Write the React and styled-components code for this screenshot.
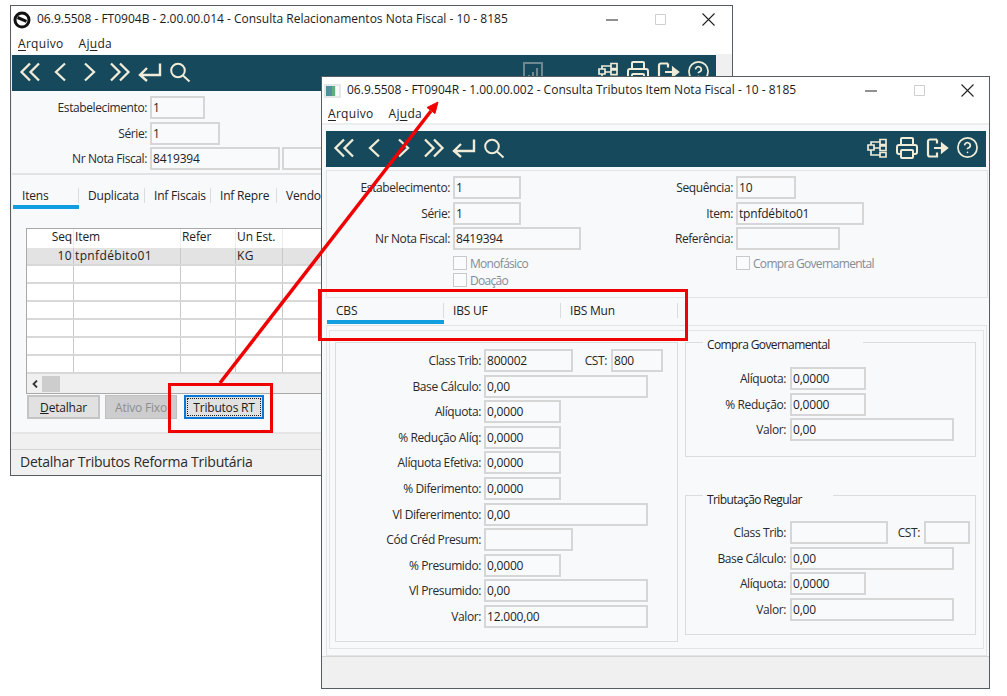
import React from 'react';
import styled, { createGlobalStyle } from 'styled-components';
import { CircleHelp, Printer } from 'lucide-react';

const GlobalStyle = createGlobalStyle`
  html, body { margin: 0; padding: 0; background: #fff; }
  body { font-family: "Open Sans", "Noto Sans", sans-serif; font-size: 12px; color: #222; }
  * { box-sizing: border-box; }
`;

const Desktop = styled.div`
  position: relative;
  width: 1007px;
  height: 696px;
  overflow: hidden;
  background: #fff;
`;

const Window = styled.div`
  position: absolute;
  left: ${(p) => p.$x}px;
  top: ${(p) => p.$y}px;
  width: ${(p) => p.$w}px;
  height: ${(p) => p.$h}px;
  display: flex;
  flex-direction: column;
  background: #f0f0f0;
  border: 1px solid #565d61;
  overflow: hidden;
`;

const TitleBar = styled.div`
  flex: none;
  height: 27px;
  display: flex;
  align-items: center;
  background: #fff;
  padding-left: 2px;
`;

const TitleText = styled.span`
  margin-left: 6px;
  padding-bottom: 2px;
  font-size: 12px;
  white-space: nowrap;
  color: #1c1c1c;
`;

const WinControls = styled.div`
  margin-left: auto;
  margin-right: ${(p) => p.$shift}px;
  display: flex;
  align-items: center;
  color: #222;
`;

const WinButton = styled.span`
  width: 48px;
  height: 27px;
  display: flex;
  align-items: center;
  justify-content: center;
  svg { display: block; }
`;

const MenuBar = styled.div`
  flex: none;
  height: ${(p) => p.$h}px;
  display: flex;
  align-items: center;
  gap: 15px;
  padding-left: ${(p) => p.$pad}px;
  background: #fff;
  font-size: 12px;
  letter-spacing: 0.3px;
  u { text-underline-offset: 2px; }
`;

const Body = styled.div`
  flex: none;
  background: #f8f9fb;
  border-top: 2px solid #ededed;
`;

const Toolbar = styled.div`
  display: flex;
  align-items: center;
  height: 36px;
  margin: ${(p) => p.$margin};
  padding: 0 ${(p) => p.$padRight}px 3px 6px;
  gap: 6px;
  background: #17495c;
  color: #f0ecd8;
`;

const ToolIcon = styled.span`
  flex: none;
  width: 24px;
  height: 24px;
  display: flex;
  align-items: center;
  justify-content: center;
  color: ${(p) => (p.$dim ? '#6f8790' : 'inherit')};
  svg { display: block; }
`;

const Spacer = styled.span`
  flex: 1;
`;

const ToolGap = styled.span`
  flex: none;
  width: ${(p) => p.$w}px;
`;

const FormPanel = styled.div`
  display: grid;
  grid-template-columns: ${(p) => p.$cols};
  height: ${(p) => p.$h}px;
  margin: ${(p) => p.$margin};
  padding-top: ${(p) => p.$padTop}px;
  background: #f8f9fb;
  border: 1px solid #e2e3e5;
  border-width: ${(p) => p.$borders};
`;

const Stack = styled.div`
  display: flex;
  flex-direction: column;
  gap: 2.6px;
`;

const Row = styled.div`
  display: flex;
  align-items: center;
  height: 23px;
  flex: none;
`;

const Label = styled.span`
  flex: none;
  width: ${(p) => p.$w}px;
  text-align: right;
  white-space: nowrap;
  font-size: 12px;
  letter-spacing: -0.4px;
  color: #2a2a2a;
`;

const Input = styled.div`
  flex: none;
  width: ${(p) => p.$w}px;
  height: 23px;
  margin-left: ${(p) => p.$gap ?? 3}px;
  padding: 2px 0 0 1px;
  background: #f9fafc;
  border: 2px solid #d6d6d6;
  font-size: 12px;
  line-height: 16px;
  letter-spacing: -0.2px;
  white-space: nowrap;
  overflow: hidden;
  color: #1d1d1d;
`;

const CheckRow = styled.div`
  display: flex;
  align-items: center;
  height: 17px;
  gap: 3px;
  margin-top: ${(p) => p.$top}px;
  padding-left: ${(p) => p.$pad}px;
  color: #858b96;
  font-size: 12px;
  letter-spacing: -0.7px;
`;

const CheckBox = styled.span`
  flex: none;
  width: 14px;
  height: 14px;
  background: #fafbfc;
  border: 1px solid #c9c9c9;
`;

const TabStrip = styled.div`
  display: flex;
  height: ${(p) => p.$h}px;
  margin: ${(p) => p.$top}px 0 0 ${(p) => p.$left}px;
  overflow: hidden;
`;

const Tab = styled.div`
  flex: none;
  width: ${(p) => p.$w}px;
  display: flex;
  align-items: center;
  padding-top: 2px;
  border-bottom: 4px solid ${(p) => (p.$active ? '#0f9fe0' : 'transparent')};
`;

const TabLabel = styled.span`
  flex: 1;
  height: 15px;
  line-height: 15px;
  padding-left: 9px;
  border-right: 1px solid #dcdcdc;
  white-space: nowrap;
  overflow: hidden;
  font-size: 12px;
  letter-spacing: -0.2px;
`;

const GridBox = styled.div`
  width: 420px;
  margin: 19px 0 0 14px;
  border: 1px solid #a9a9a9;
  border-right: 0;
  background: #fff;
`;

const GridRow = styled.div`
  display: grid;
  grid-template-columns: 47px 107px 55px 47px 1fr;
  height: ${(p) => (p.$header ? 19 : 18)}px;
  background: ${(p) => (p.$selected ? '#e3e3e3' : '#fff')};
  border-bottom: ${(p) => (p.$header ? 'none' : '2px solid #d8d8d8')};
`;

const GridCell = styled.span`
  padding: 0 1px;
  text-align: ${(p) => (p.$right ? 'right' : 'left')};
  border-right: 1px solid ${(p) => (p.$header ? '#ececec' : '#c9c9c9')};
  font-size: 12px;
  line-height: 16px;
  letter-spacing: ${(p) => (p.$header ? '-0.01em' : '0.03em')};
  white-space: nowrap;
  overflow: hidden;
`;

const ScrollBar = styled.div`
  display: flex;
  align-items: center;
  height: 19px;
  background: #f0f0f0;
  padding-left: 5px;
  gap: 4px;
  color: #333;
`;

const ScrollThumb = styled.span`
  width: 18px;
  height: 16px;
  background: #cdcdcd;
`;

const ButtonRow = styled.div`
  display: flex;
  height: 24px;
  margin: 1px 0 13px 15px;
`;

const Button = styled.span`
  flex: none;
  width: ${(p) => p.$w}px;
  margin-right: ${(p) => p.$gap}px;
  display: flex;
  align-items: center;
  justify-content: center;
  font-size: 12px;
  letter-spacing: -0.2px;
  color: ${(p) => (p.$disabled ? '#8d8d8d' : '#1c1c1c')};
  background: ${(p) => (p.$disabled ? '#cdcdcd' : '#e1e1e1')};
  border: ${(p) => (p.$focus ? '2px solid #0a78d7' : p.$disabled ? '1px solid #bfbfbf' : '2px solid #c4c4c4')};
  outline: ${(p) => (p.$focus ? '1px dotted #222' : 'none')};
  outline-offset: -4px;
`;

const BackBody = styled(Body)`
  width: 704px;
  margin-left: 1px;
  border-top: 0;
  border-bottom: 2px solid #e6e6e6;
`;

const GrayGap = styled.div`
  flex: none;
  height: ${(p) => p.$h}px;
  background: #f0f0f0;
`;

const StatusLine = styled.div`
  flex: 1;
  display: flex;
  align-items: center;
  padding: 0 0 3px 9px;
  border-top: 1px solid #d5d5d5;
  background: #f0f0f0;
  font-size: 14px;
  letter-spacing: -0.25px;
  color: #2a2a2a;
`;

const FrontHead = styled.div`
  height: 8px;
`;

const Pane = styled.div`
  margin: 1px 2px 0 4px;
  padding: 4px 2px 6px;
  border: 1px solid #e2e3e5;
  background: #f8f9fb;
`;

const PaneInner = styled.div`
  display: flex;
  gap: 7px;
  height: 319px;
  padding: 11px 0 0 5px;
  border: 1px solid #e2e3e5;
`;

const LeftGroup = styled.div`
  flex: none;
  width: 343px;
  height: 300px;
  padding-top: 6px;
  border: 1px solid #dcdcdc;
`;

const RightColumn = styled.div`
  flex: none;
  width: 291px;
  margin-top: -8px;
  display: flex;
  flex-direction: column;
  gap: 30px;
`;

const Group = styled.fieldset`
  height: ${(p) => p.$h}px;
  margin: 0;
  padding: ${(p) => p.$pad}px 0 0;
  min-width: 0;
  border: 1px solid #dcdcdc;
  legend {
    position: relative;
    top: ${(p) => p.$legendTop}px;
    width: ${(p) => p.$legend}px;
    margin-left: 17px;
    padding: 0 0 0 4px;
    font-size: 12px;
    line-height: 16px;
    letter-spacing: -0.6px;
    white-space: nowrap;
    color: #222;
  }
`;

const Highlight = styled.div`
  position: absolute;
  left: ${(p) => p.$x}px;
  top: ${(p) => p.$y}px;
  width: ${(p) => p.$w}px;
  height: ${(p) => p.$h}px;
  border: 3.5px solid #f00000;
`;

const ArrowLayer = styled.svg`
  position: absolute;
  left: 0;
  top: 0;
  pointer-events: none;
`;

const Double = ({ right }) => (
  <svg width="24" height="24" viewBox="0 0 24 24" fill="none" stroke="currentColor" strokeWidth="2.3">
    <path d={right ? 'M3 3.500 11.500 12 3 20.500M12 3.500 20.500 12 12 20.500' : 'M12 3.500 3.500 12 12 20.500M21 3.500 12.500 12 21 20.500'} />
  </svg>
);

const Single = ({ right }) => (
  <svg width="24" height="24" viewBox="0 0 24 24" fill="none" stroke="currentColor" strokeWidth="2.3">
    <path d={right ? 'M7 3.500 16 12 7 20.500' : 'M17 3.500 8 12 17 20.500'} />
  </svg>
);

const ReturnIcon = () => (
  <svg width="24" height="24" viewBox="0 0 24 24" fill="none" stroke="currentColor" strokeWidth="2.4">
    <path d="M22 3.500V15H2M9 8 2 15l7 6" />
  </svg>
);

const SearchIcon = () => (
  <svg width="24" height="24" viewBox="0 0 24 24" fill="none" stroke="currentColor" strokeWidth="2">
    <circle cx="10" cy="10.500" r="6.800" />
    <path d="m15 15.500 6.500 6" />
  </svg>
);

const ChartIcon = () => (
  <svg width="22" height="22" viewBox="0 0 22 22" fill="none" stroke="currentColor" strokeWidth="2">
    <path d="M2 2h18v18H2zM7 16v-2M11 16v-5M15 16V7" />
  </svg>
);

const TreeIcon = () => (
  <svg width="22" height="22" viewBox="0 0 22 22" fill="none" stroke="currentColor" strokeWidth="1.700">
    <path d="M2 8h6v5H2zM14 2.500h6v5h-6zM14 9h6v4.500h-6zM14 15.500h6V20h-6zM5 8V5h9M8 11h6M5 13v5h9" />
  </svg>
);

const ExitIcon = () => (
  <svg width="24" height="24" viewBox="0 0 24 24" fill="none" stroke="currentColor" strokeWidth="2.2">
    <path d="M12 3.500H5a2 2 0 0 0-2 2v13a2 2 0 0 0 2 2h7v-4" />
    <path d="M12 3.500v4M9 12h11" />
    <path d="m17 8 5 4-5 4z" fill="currentColor" />
  </svg>
);

const TotvsLogo = () => (
  <svg width="18" height="18" viewBox="0 0 18 18">
    <circle cx="9" cy="9" r="7" fill="none" stroke="#111" strokeWidth="3" />
    <path d="m4.500 6.500 9 3.800" stroke="#111" strokeWidth="3" />
  </svg>
);

const FormIcon = () => (
  <svg width="17" height="14" viewBox="0 0 17 14">
    <rect width="17" height="14" fill="#e5e8e8" />
    <rect x="2" y="2" width="6" height="10" fill="#4f8fa0" />
    <rect x="8" y="2" width="3" height="10" fill="#5fae7c" />
    <rect x="12" y="2" width="3" height="10" fill="#fafafa" />
  </svg>
);

const CloseIcon = () => (
  <svg width="13" height="13" viewBox="0 0 13 13" stroke="#222" strokeWidth="1.100">
    <path d="m.5.500 12 12M12.500.500l-12 12" />
  </svg>
);

const MaxIcon = () => (
  <svg width="11" height="11" viewBox="0 0 11 11" fill="none" stroke="#cfcfcf">
    <path d="M.5.500h10v10H.5z" />
  </svg>
);

const MinIcon = () => (
  <svg width="12" height="2" viewBox="0 0 12 2" stroke="#222">
    <path d="M0 1h12" />
  </svg>
);

const Controls = ({ shift }) => (
  <WinControls $shift={shift}>
    <WinButton><MinIcon /></WinButton>
    <WinButton><MaxIcon /></WinButton>
    <WinButton><CloseIcon /></WinButton>
  </WinControls>
);

const Menu = ({ h, pad }) => (
  <MenuBar $h={h} $pad={pad}>
    <span><u>A</u>rquivo</span>
    <span>Aj<u>u</u>da</span>
  </MenuBar>
);

const NavIcons = () => (
  <>
    <ToolIcon><Double /></ToolIcon>
    <ToolIcon><Single /></ToolIcon>
    <ToolIcon><Single right /></ToolIcon>
    <ToolIcon><Double right /></ToolIcon>
    <ToolIcon><ReturnIcon /></ToolIcon>
    <ToolIcon><SearchIcon /></ToolIcon>
  </>
);

const ActionIcons = () => (
  <>
    <ToolIcon><TreeIcon /></ToolIcon>
    <ToolIcon><Printer size={24} strokeWidth={2} /></ToolIcon>
    <ToolIcon><ExitIcon /></ToolIcon>
    <ToolIcon><CircleHelp size={23} strokeWidth={1.8} /></ToolIcon>
  </>
);

const Field = ({ label, value, lw, w, gap }) => (
  <Row>
    <Label $w={lw}>{label}</Label>
    <Input $w={w} $gap={gap}>{value}</Input>
  </Row>
);

const itemRows = Array.from({ length: 6 });

const BackWindow = () => (
  <Window $x={10} $y={5} $w={723} $h={471}>
    <TitleBar>
      <TotvsLogo />
      <TitleText>06.9.5508 - FT0904B - 2.00.00.014 - Consulta Relacionamentos Nota Fiscal - 10 - 8185</TitleText>
      <Controls shift={0} />
    </TitleBar>
    <Menu h={21} pad={7} />
    <BackBody>
      <Toolbar $margin="1px 0 0 0" $padRight={6}>
        <NavIcons />
        <Spacer />
        <ToolIcon $dim><ChartIcon /></ToolIcon>
        <ToolGap $w={39} />
        <ActionIcons />
      </Toolbar>
      <FormPanel $cols="1fr" $h={82} $margin="2px 0 0" $padTop={3} $borders="0 0 2px 0">
        <Stack>
          <Field label="Estabelecimento:" value="1" lw={135} w={55} />
          <Field label="Série:" value="1" lw={135} w={70} />
          <Row>
            <Label $w={135}>Nr Nota Fiscal:</Label>
            <Input $w={130}>8419394</Input>
            <Input $w={130} $gap={2} />
          </Row>
        </Stack>
      </FormPanel>
      <TabStrip $h={25} $top={9} $left={1}>
        {['Itens', 'Duplicata', 'Inf Fiscais', 'Inf Repre', 'Vendor'].map((t, i) => (
          <Tab key={t} $w={66} $active={i === 0}><TabLabel>{t}</TabLabel></Tab>
        ))}
      </TabStrip>
      <GridBox>
        <GridRow $header>
          <GridCell $header $right>Seq</GridCell>
          <GridCell $header>Item</GridCell>
          <GridCell $header>Refer</GridCell>
          <GridCell $header>Un Est.</GridCell>
          <GridCell $header />
        </GridRow>
        <GridRow $selected>
          <GridCell $right>10</GridCell>
          <GridCell>tpnfdébito01</GridCell>
          <GridCell />
          <GridCell>KG</GridCell>
          <GridCell />
        </GridRow>
        {itemRows.map((_, i) => (
          <GridRow key={i}>
            <GridCell />
            <GridCell />
            <GridCell />
            <GridCell />
            <GridCell />
          </GridRow>
        ))}
        <ScrollBar>
          <svg width="6" height="8" viewBox="0 0 6 8" fill="none" stroke="currentColor" strokeWidth="1.800">
            <path d="M5 .5 1.500 4 5 7.500" />
          </svg>
          <ScrollThumb />
        </ScrollBar>
      </GridBox>
      <ButtonRow>
        <Button $w={73} $gap={5}><span><u>D</u>etalhar</span></Button>
        <Button $w={72} $gap={7} $disabled>Ativo Fixo</Button>
        <Button $w={80} $gap={0} $focus>Tributos RT</Button>
      </ButtonRow>
    </BackBody>
    <GrayGap $h={15} />
    <StatusLine>Detalhar Tributos Reforma Tributária</StatusLine>
  </Window>
);

const cbsRows = [
  ['% Redução Alíq:', '0,0000', 77],
  ['Alíquota Efetiva:', '0,0000', 77],
  ['% Diferimento:', '0,0000', 77],
  ['Vl Difererimento:', '0,00', 164],
  ['Cód Créd Presum:', '', 89],
  ['% Presumido:', '0,0000', 77],
  ['Vl Presumido:', '0,00', 164],
  ['Valor:', '12.000,00', 164],
];

const FrontWindow = () => (
  <Window $x={321} $y={76} $w={669} $h={613}>
    <TitleBar>
      <FormIcon />
      <TitleText>06.9.5508 - FT0904R - 1.00.00.002 - Consulta Tributos Item Nota Fiscal - 10 - 8185</TitleText>
      <Controls shift={-2} />
    </TitleBar>
    <Menu h={19} pad={6} />
    <Body>
      <FrontHead />
      <Toolbar $margin="-2px 3px 0 4px" $padRight={7}>
        <NavIcons />
        <Spacer />
        <ActionIcons />
      </Toolbar>
      <FormPanel $cols="300px 1fr" $h={128} $margin="3px 1px 0 4px" $padTop={5} $borders="1px">
        <Stack>
          <Field label="Estabelecimento:" value="1" lw={123} w={68} />
          <Field label="Série:" value="1" lw={123} w={68} />
          <Field label="Nr Nota Fiscal:" value="8419394" lw={123} w={128} />
          <CheckRow $pad={126} $top={2}><CheckBox />Monofásico</CheckRow>
          <CheckRow $pad={126} $top={-2.6}><CheckBox />Doação</CheckRow>
        </Stack>
        <Stack>
          <Field label="Sequência:" value="10" lw={106} w={60} />
          <Field label="Item:" value="tpnfdébito01" lw={106} w={128} />
          <Field label="Referência:" value="" lw={106} w={104} />
          <CheckRow $pad={109} $top={2}><CheckBox />Compra Governamental</CheckRow>
        </Stack>
      </FormPanel>
      <TabStrip $h={26} $top={0} $left={5}>
        {['CBS', 'IBS UF', 'IBS Mun'].map((t, i) => (
          <Tab key={t} $w={117} $active={i === 0}><TabLabel>{t}</TabLabel></Tab>
        ))}
      </TabStrip>
      <Pane>
        <PaneInner>
          <LeftGroup>
            <Stack>
              <Row>
                <Label $w={145}>Class Trib:</Label>
                <Input $w={89}>800002</Input>
                <Label $w={34}>CST:</Label>
                <Input $w={52} $gap={4}>800</Input>
              </Row>
              <Field label="Base Cálculo:" value="0,00" lw={145} w={164} />
              <Field label="Alíquota:" value="0,0000" lw={145} w={77} />
              {cbsRows.map(([label, value, w]) => (
                <Field key={label} label={label} value={value} lw={145} w={w} />
              ))}
            </Stack>
          </LeftGroup>
          <RightColumn>
            <Group $h={123} $pad={17} $legend={160} $legendTop={3}>
              <legend>Compra Governamental</legend>
              <Stack>
                <Field label="Alíquota:" value="0,0000" lw={100} w={76} gap={4} />
                <Field label="% Redução:" value="0,0000" lw={100} w={76} gap={4} />
                <Field label="Valor:" value="0,00" lw={100} w={164} gap={4} />
              </Stack>
            </Group>
            <Group $h={148} $pad={18} $legend={130} $legendTop={5}>
              <legend>Tributação Regular</legend>
              <Stack>
                <Row>
                  <Label $w={100}>Class Trib:</Label>
                  <Input $w={98} $gap={4} />
                  <Label $w={32}>CST:</Label>
                  <Input $w={46} $gap={4} />
                </Row>
                <Field label="Base Cálculo:" value="0,00" lw={100} w={164} gap={4} />
                <Field label="Alíquota:" value="0,0000" lw={100} w={76} gap={4} />
                <Field label="Valor:" value="0,00" lw={100} w={164} gap={4} />
              </Stack>
            </Group>
          </RightColumn>
        </PaneInner>
      </Pane>
    </Body>
    <StatusLine />
  </Window>
);

export default function App() {
  return (
    <Desktop>
      <GlobalStyle />
      <BackWindow />
      <Highlight $x={168} $y={383} $w={105} $h={50} />
      <FrontWindow />
      <Highlight $x={318} $y={289} $w={370} $h={52} />
      <ArrowLayer width="1007" height="696" viewBox="0 0 1007 696">
        <path d="M220 383 431 111" stroke="#f00000" strokeWidth="3.500" fill="none" />
        <path d="m438 102-11 5.500 8 6z" fill="#f00000" stroke="#f00000" />
      </ArrowLayer>
    </Desktop>
  );
}
